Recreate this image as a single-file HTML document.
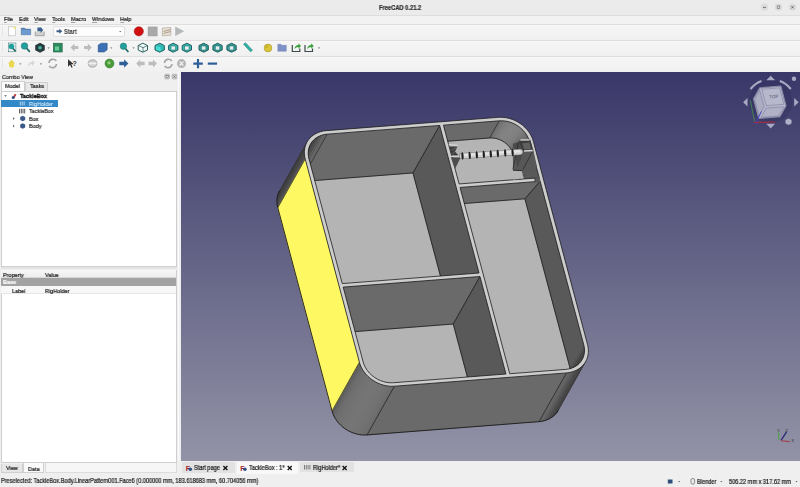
<!DOCTYPE html><html><head><meta charset="utf-8"><style>
*{margin:0;padding:0;box-sizing:border-box}
html,body{width:800px;height:487px;overflow:hidden;background:#efefef;font-family:"Liberation Sans",sans-serif;color:#1c1c1c}
.a{position:absolute}
.t{position:absolute;z-index:2;will-change:transform;-webkit-text-stroke:0.22px currentColor;white-space:nowrap;font-size:5.6px;line-height:6px}
#ov{position:absolute;left:0;top:0;z-index:1}
</style></head><body><div class="a" style="left:0;top:0;width:800px;height:15px;background:#ebebeb"></div>
<div class="t" style="left:378.5px;top:4.5px;font-weight:bold;font-size:6.50px;transform:scaleX(0.885);transform-origin:0 50%;color:#2e2e2e">FreeCAD 0.21.2</div>
<div class="a" style="left:0;top:15px;width:800px;height:9px;background:#f2f2f2;border-top:0.5px solid #dedede"></div>
<div class="t" style="left:4.0px;top:15.7px;font-size:6.21px;transform:scaleX(0.885);transform-origin:0 50%">File</div>
<div class="t" style="left:18.8px;top:15.7px;font-size:6.21px;transform:scaleX(0.885);transform-origin:0 50%">Edit</div>
<div class="t" style="left:34.2px;top:15.7px;font-size:6.21px;transform:scaleX(0.885);transform-origin:0 50%">View</div>
<div class="t" style="left:52.2px;top:15.7px;font-size:6.21px;transform:scaleX(0.885);transform-origin:0 50%">Tools</div>
<div class="t" style="left:70.9px;top:15.7px;font-size:6.21px;transform:scaleX(0.885);transform-origin:0 50%">Macro</div>
<div class="t" style="left:91.9px;top:15.7px;font-size:6.21px;transform:scaleX(0.885);transform-origin:0 50%">Windows</div>
<div class="t" style="left:120.4px;top:15.7px;font-size:6.21px;transform:scaleX(0.885);transform-origin:0 50%">Help</div>
<div class="a" style="left:0;top:24px;width:800px;height:16px;background:linear-gradient(#f6f6f6,#f0f0f0);border-top:0.5px solid #e2dede"></div>
<div class="a" style="left:0;top:40px;width:800px;height:16px;background:linear-gradient(#f6f6f6,#f0f0f0);border-top:0.5px solid #e2dede"></div>
<div class="a" style="left:0;top:56px;width:800px;height:16px;background:linear-gradient(#f6f6f6,#f0f0f0);border-top:0.5px solid #e2dede"></div>
<div class="t" style="left:64px;top:28.5px;font-size:6.33px;transform:scaleX(0.885);transform-origin:0 50%;font-weight:bold;color:#333;-webkit-text-stroke:0px">Start</div>
<div class="a" style="left:0;top:71.5px;width:180.5px;height:403px;background:#efefef"></div>
<div class="t" style="left:2px;top:73.8px;font-size:6.21px;transform:scaleX(0.885);transform-origin:0 50%;color:#2a2a2a">Combo View</div>
<div class="a" style="left:0.8px;top:81px;width:24px;height:11px;background:#fbfbfb;border:0.5px solid #cfcfcf;border-bottom:none;border-radius:1px 1px 0 0"></div>
<div class="t" style="left:5px;top:83.2px;font-size:6.21px;transform:scaleX(0.885);transform-origin:0 50%">Model</div>
<div class="a" style="left:25.3px;top:82.2px;width:23px;height:9.3px;background:#e8e8e8;border:0.5px solid #cfcfcf;border-bottom:none;border-radius:1px 1px 0 0"></div>
<div class="t" style="left:30px;top:83.2px;font-size:6.21px;transform:scaleX(0.885);transform-origin:0 50%">Tasks</div>
<div class="a" style="left:0.8px;top:91.4px;width:176px;height:175.5px;background:#ffffff;border:0.5px solid #cfcfcf"></div>
<div class="a" style="left:1.2px;top:99.8px;width:56.6px;height:7px;background:#3388c8"></div>
<div class="t" style="left:20.2px;top:93.2px;font-weight:bold;font-size:6.21px;transform:scaleX(0.885);transform-origin:0 50%;color:#111;-webkit-text-stroke:0.35px #111">TackleBox</div>
<div class="t" style="left:28.6px;top:100.5px;font-size:6.10px;transform:scaleX(0.885);transform-origin:0 50%;color:#d2e6f6;-webkit-text-stroke:0.1px #d2e6f6">RigHolder</div>
<div class="t" style="left:28.8px;top:108.3px;font-size:6.10px;transform:scaleX(0.885);transform-origin:0 50%;color:#2a2a2a">TackleBox</div>
<div class="t" style="left:28.7px;top:115.7px;font-size:6.21px;transform:scaleX(0.885);transform-origin:0 50%;color:#2a2a2a">Box</div>
<div class="t" style="left:28.7px;top:123.2px;font-size:6.21px;transform:scaleX(0.885);transform-origin:0 50%;color:#2a2a2a">Body</div>
<div class="a" style="left:0.8px;top:266.9px;width:176px;height:2.6px;background:#e4e4e4"></div>
<div class="a" style="left:0.8px;top:269.5px;width:176px;height:193px;background:#ffffff;border:0.5px solid #cfcfcf"></div>
<div class="a" style="left:1.2px;top:270.3px;width:175px;height:7.7px;background:linear-gradient(#f7f7f7,#ededed);border-bottom:0.5px solid #d8d8d8"></div>
<div class="t" style="left:2.8px;top:272.2px;font-size:6.21px;transform:scaleX(0.885);transform-origin:0 50%">Property</div>
<div class="t" style="left:45px;top:272.2px;font-size:6.21px;transform:scaleX(0.885);transform-origin:0 50%">Value</div>
<div class="a" style="left:1.2px;top:278px;width:175px;height:8px;background:#a2a2a2"></div>
<div class="t" style="left:3px;top:279.3px;font-size:6.21px;transform:scaleX(0.885);transform-origin:0 50%;color:#fff;font-weight:bold;-webkit-text-stroke:0.2px #fff">Base</div>
<div class="a" style="left:1.2px;top:286px;width:175px;height:8px;background:#f7f7f7;border-bottom:0.5px solid #e6e6e6"></div>
<div class="t" style="left:11.8px;top:288.2px;font-size:6.21px;transform:scaleX(0.885);transform-origin:0 50%">Label</div>
<div class="t" style="left:45px;top:288.2px;font-size:6.21px;transform:scaleX(0.885);transform-origin:0 50%">RigHolder</div>
<div class="a" style="left:1px;top:463.5px;width:21.5px;height:9px;background:#e6e6e6;border:0.5px solid #d0d0d0;border-top:none"></div>
<div class="t" style="left:6px;top:465.4px;font-size:6.21px;transform:scaleX(0.885);transform-origin:0 50%">View</div>
<div class="a" style="left:23.3px;top:462.8px;width:21px;height:10.6px;background:#fafafa;border:0.5px solid #d0d0d0;border-top:none"></div>
<div class="t" style="left:28px;top:465.6px;font-size:6.21px;transform:scaleX(0.885);transform-origin:0 50%">Data</div>
<div class="a" style="left:45px;top:462.8px;width:131.8px;height:10.6px;background:#f6f6f6;border:0.5px solid #dcdcdc;border-top:none"></div>
<div class="a" style="left:180.7px;top:72.4px;width:619.3px;height:388.3px;background:linear-gradient(#383768,#9393a7)"></div>
<div class="a" style="left:178px;top:72.4px;width:1.2px;height:388.3px;background:#fbfbff"></div>
<div class="a" style="left:180.3px;top:460.7px;width:619.7px;height:14px;background:#efefef"></div>
<div class="a" style="left:181.7px;top:462.3px;width:53px;height:10.7px;background:#e2e2e2;border-radius:1px"></div>
<div class="t" style="left:193.6px;top:465.4px;font-size:6.33px;transform:scaleX(0.885);transform-origin:0 50%">Start page</div>
<div class="a" style="left:236.7px;top:462.3px;width:61.5px;height:11.9px;background:#f8f8f8;border-radius:1px"></div>
<div class="t" style="left:249.2px;top:465.4px;font-size:6.33px;transform:scaleX(0.885);transform-origin:0 50%">TackleBox : 1*</div>
<div class="a" style="left:299.9px;top:462.3px;width:54.4px;height:10.2px;background:#e2e2e2;border-radius:1px"></div>
<div class="t" style="left:312.5px;top:465.4px;font-size:6.33px;transform:scaleX(0.885);transform-origin:0 50%">RigHolder*</div>
<div class="a" style="left:0;top:474.3px;width:800px;height:12.7px;background:#efefef"></div>
<div class="t" style="left:1.2px;top:478.2px;font-size:6.33px;transform:scaleX(0.885);transform-origin:0 50%;color:#222">Preselected: TackleBox.Body.LinearPattern001.Face6 (0.000000 mm, 183.618683 mm, 60.704056 mm)</div>
<div class="t" style="left:697px;top:478.5px;font-size:6.33px;transform:scaleX(0.885);transform-origin:0 50%">Blender</div>
<div class="t" style="left:728.7px;top:478.5px;font-size:6.33px;transform:scaleX(0.885);transform-origin:0 50%">506.22 mm x 317.62 mm</div>
<svg id="ov" width="800" height="487" viewBox="0 0 800 487"><defs><clipPath id="c1"><polygon points="308.93,158.66 308.35,155.69 308.20,152.73 308.47,149.85 309.17,147.08 310.28,144.48 311.78,142.09 313.65,139.95 315.86,138.10 318.36,136.57 321.12,135.39 324.08,134.57 327.20,134.13 439.68,125.43 479.04,273.02 342.25,283.59"/></clipPath><clipPath id="c2"><polygon points="343.18,287.08 479.97,276.50 505.98,374.03 393.50,382.72 390.27,382.77 387.00,382.44 383.73,381.72 380.53,380.63 377.45,379.19 374.54,377.42 371.85,375.35 369.42,373.02 367.31,370.47 365.54,367.75 364.14,364.89 363.15,361.95"/></clipPath><clipPath id="c3"><polygon points="443.42,125.14 499.24,120.83 502.47,120.78 505.74,121.11 509.01,121.83 512.21,122.92 515.29,124.36 518.20,126.13 520.89,128.20 523.32,130.53 525.43,133.07 527.20,135.80 528.60,138.66 529.60,141.60 539.24,177.75 459.11,183.95"/></clipPath><clipPath id="c4"><polygon points="460.04,187.43 540.17,181.24 583.81,344.89 584.39,347.86 584.54,350.82 584.27,353.70 583.57,356.47 582.46,359.07 580.96,361.46 579.09,363.60 576.89,365.45 574.38,366.98 571.63,368.16 568.66,368.98 565.54,369.42 509.72,373.74"/></clipPath></defs><circle cx="764.5" cy="7.2" r="3.6" fill="#dcdcdc"/><circle cx="778.5" cy="7.2" r="3.6" fill="#dcdcdc"/><circle cx="792.5" cy="7.2" r="3.6" fill="#dcdcdc"/><line x1="763" y1="7.4" x2="766" y2="7.4" stroke="#333" stroke-width="0.6"/><rect x="777.2" y="5.9" width="2.6" height="2.6" fill="none" stroke="#555" stroke-width="0.5"/><path d="M791.2 5.9 L793.8 8.5 M793.8 5.9 L791.2 8.5" stroke="#333" stroke-width="0.6"/><rect x="8.6" y="26.8" width="7" height="9" fill="#fdfdfd" stroke="#b8b8b8" stroke-width="0.6"/><path d="M13 26.8 h2.6 v3 z" fill="#f2ea60"/><path d="M21.2 28 h3.5 l1 1 h5 v5.8 h-9.5 z" fill="#5a86b8" stroke="#43698f" stroke-width="0.4"/><rect x="21.5" y="29.8" width="9" height="5" fill="#6f9ad0"/><path d="M35.2 31.5 v4.2 h9 v-4.2" fill="#d2d2d2" stroke="#8a8a8a" stroke-width="0.7"/><path d="M37.4 27.5 l3.2 0 l0 -0.5 l2.6 3 l-2.6 3 l0 -1.7 l-3.2 0 z" fill="#3a5f8f"/><rect x="53.4" y="26.6" width="71.2" height="9.7" rx="1" fill="#fdfdfd" stroke="#c4c4c4" stroke-width="0.5"/><path d="M56.5 30.2 h2.8 v-1.5 l3 2.5 l-3 2.5 v-1.5 h-2.8 z" fill="#3d5f87"/><path d="M119.2 30.9 l2 0 l-1 1.3 z" fill="#555"/><circle cx="138.8" cy="31.3" r="4.6" fill="#d21010" stroke="#9c0c0c" stroke-width="0.5"/><rect x="148" y="26.9" width="9.2" height="9.1" fill="#a9a9a9" stroke="#999" stroke-width="0.4"/><path d="M162.3 28 l8.5 -0.5 l0 7.8 l-8.5 0.5 z" fill="#e6e1d6" stroke="#9b8f80" stroke-width="0.5"/><path d="M163.5 31.5 l7 -2 M163.5 33.5 l7 -2" stroke="#8c6f4c" stroke-width="0.6"/><path d="M175.2 26.6 l9 4.7 l-9 4.7 z" fill="#b4b8b8"/><rect x="8.3" y="43" width="7.6" height="8.8" fill="#eef6f6" stroke="#3a6a6a" stroke-width="0.5"/><circle cx="11.5" cy="46.5" r="2.8" fill="#22a09e"/><path d="M13 48.5 l2.5 2.8" stroke="#1f5a58" stroke-width="1.5"/><circle cx="24.5" cy="46" r="3.3" fill="#22a09e" stroke="#1b6e6c" stroke-width="0.5"/><path d="M26.6 48.3 l3.2 3.6" stroke="#1f6a68" stroke-width="1.7"/><polygon points="40,42.8 44.8,45.3 44.8,50.3 40,52.8 35.2,50.3 35.2,45.3" fill="#2b3b3b"/><circle cx="40" cy="47.8" r="1.8" fill="#3fb3a8"/><path d="M47.5 47.4 l2 0 l-1 1.3 z" fill="#555"/><rect x="53.4" y="43.2" width="8.8" height="8.8" fill="#2b8a5c" stroke="#1e5e40" stroke-width="0.6"/><rect x="55" y="46.5" width="4" height="4" fill="#6acb98"/><path d="M70.5 47.5 l4 -4 v2.5 h3.8 v3 h-3.8 v2.5 z" fill="#bdbdbd"/><path d="M91.8 47.5 l-4 -4 v2.5 h-3.8 v3 h3.8 v2.5 z" fill="#bdbdbd"/><path d="M98.2 45 l3 -1.8 l6 0 l0 6.6 l-3 2.2 l-6 0 z" fill="#3c70b5" stroke="#24497a" stroke-width="0.5"/><path d="M110.3 47.4 l2 0 l-1 1.3 z" fill="#555"/><circle cx="123.4" cy="46.2" r="3.2" fill="#22a09e" stroke="#1b6e6c" stroke-width="0.5"/><path d="M125.4 48.5 l3 3.5" stroke="#1f6a68" stroke-width="1.7"/><path d="M132.5 47.4 l2 0 l-1 1.3 z" fill="#555"/><polygon points="138.2,45.5 142.8,43.2 147.5,45.5 147.5,50.0 142.8,52.2 138.2,50.0" fill="#f0f8f8" stroke="#28605e" stroke-width="1"/><path d="M138.5 45.5 l4.5 2.2 l4.5 -2.2 M143 47.7 v4.3" stroke="#245a58" stroke-width="0.7" fill="none"/><polygon points="155.0,45.5 159.7,43.2 164.3,45.5 164.3,50.0 159.7,52.2 155.0,50.0" fill="#2fb8b4" stroke="#28605e" stroke-width="1"/><polygon points="156.0,45.9 160.7,47.2 160.7,51.2 156.0,49.7" fill="#48dcd6"/><polygon points="168.6,45.5 173.2,43.2 177.9,45.5 177.9,50.0 173.2,52.2 168.6,50.0" fill="#2fb8b4" stroke="#28605e" stroke-width="1"/><rect x="171.0" y="46.0" width="4.5" height="4.0" fill="#dff2f1" stroke="#28605e" stroke-width="0.5"/><polygon points="182.2,45.5 186.8,43.2 191.5,45.5 191.5,50.0 186.8,52.2 182.2,50.0" fill="#2fb8b4" stroke="#28605e" stroke-width="1"/><rect x="184.6" y="46.0" width="4.5" height="4.0" fill="#dff2f1" stroke="#28605e" stroke-width="0.5"/><polygon points="199.0,45.5 203.7,43.2 208.3,45.5 208.3,50.0 203.7,52.2 199.0,50.0" fill="#2f9c98" stroke="#28605e" stroke-width="1"/><rect x="201.4" y="46.0" width="4.5" height="4.0" fill="#dff2f1" stroke="#28605e" stroke-width="0.5"/><polygon points="212.9,45.5 217.6,43.2 222.2,45.5 222.2,50.0 217.6,52.2 212.9,50.0" fill="#2f9c98" stroke="#28605e" stroke-width="1"/><rect x="215.3" y="46.0" width="4.5" height="4.0" fill="#dff2f1" stroke="#28605e" stroke-width="0.5"/><polygon points="226.9,45.5 231.6,43.2 236.2,45.5 236.2,50.0 231.6,52.2 226.9,50.0" fill="#2f9c98" stroke="#28605e" stroke-width="1"/><rect x="229.3" y="46.0" width="4.5" height="4.0" fill="#dff2f1" stroke="#28605e" stroke-width="0.5"/><path d="M243.5 44.2 l2 -1.5 l7 7.5 l-2 1.6 z" fill="#2bb0a8" stroke="#1f7a75" stroke-width="0.5"/><circle cx="268" cy="48" r="3.9" fill="#d9c53a" stroke="#a08a1c" stroke-width="0.5"/><circle cx="266.5" cy="46.5" r="1.5" fill="#c8b22c"/><path d="M277.8 44.3 h3.2 l0.8 1 h4.5 v6 h-8.5 z" fill="#7f92c8" stroke="#6678ab" stroke-width="0.4"/><path d="M292.3 45 v6.5 h7.5 v-3" fill="none" stroke="#3b4a4a" stroke-width="1.2"/><path d="M294.5 49 q0.5 -4 4 -4 v-1.8 l2.5 2.8 l-2.5 2.8 v-1.8 q-2.5 0 -4 2z" fill="#3ea03a"/><path d="M305 45 v6.5 h7.5 v-3" fill="none" stroke="#3b4a4a" stroke-width="1.2"/><path d="M307.2 49 q0.5 -4 4 -4 v-1.8 l2.5 2.8 l-2.5 2.8 v-1.8 q-2.5 0 -4 2z" fill="#3ea03a"/><path d="M318.0 47.4 l2 0 l-1 1.3 z" fill="#555"/><path d="M8 63.5 l3.6 -3.8 l3.6 3.8 h-2 v3.5 h-3.2 v-3.5 z" fill="#e5d34a"/><circle cx="11.6" cy="65" r="2.6" fill="#e9d850"/><path d="M19.3 63.4 l2 0 l-1 1.3 z" fill="#555"/><path d="M28 66.5 q0 -4.5 4 -4.5 v-2 l3 3 l-3 3 v-2 q-2.5 0 -4 2.5z" fill="#d8d8d8"/><path d="M40.0 63.4 l2 0 l-1 1.3 z" fill="#555"/><path d="M49 63 a4 4 0 0 1 7.3 -2" fill="none" stroke="#a6a6a6" stroke-width="1.6"/><path d="M56.5 64 a4 4 0 0 1 -7.3 2" fill="none" stroke="#a6a6a6" stroke-width="1.6"/><path d="M68 59.3 l0 7.5 l2 -2 l1.5 3 l1.2 -0.6 l-1.5 -3 l2.7 0 z" fill="#333"/><text x="72.5" y="65.8" font-size="7" font-weight="bold" fill="#3a3a3a" font-family="Liberation Sans">?</text><ellipse cx="92.5" cy="63.5" rx="4.3" ry="3.7" fill="#d0d0d0" stroke="#9a9a9a" stroke-width="0.8"/><rect x="88.5" y="62.7" width="8" height="1.6" fill="#f4f4f4"/><circle cx="109.5" cy="63.5" r="4.5" fill="#4a9c3a" stroke="#2f6e22" stroke-width="0.5"/><circle cx="109" cy="62.8" r="1.6" fill="#9ad07c"/><path d="M119.3 61.8 h4.8 v-2.5 l4.3 4.2 l-4.3 4.2 v-2.5 h-4.8 z" fill="#2f5f97"/><path d="M136.2 63.5 l4 -4 v2.3 h4.5 v3.4 h-4.5 v2.3 z" fill="#bdbdbd"/><path d="M157 63.5 l-4 -4 v2.3 h-4.5 v3.4 h4.5 v2.3 z" fill="#bdbdbd"/><path d="M164.5 63 a4 4 0 0 1 7.3 -2" fill="none" stroke="#a6a6a6" stroke-width="1.6"/><path d="M172 64 a4 4 0 0 1 -7.3 2" fill="none" stroke="#a6a6a6" stroke-width="1.6"/><circle cx="181.5" cy="63.6" r="4.5" fill="#b4b4b4"/><path d="M179.6 61.7 l3.8 3.8 M183.4 61.7 l-3.8 3.8" stroke="#f4f4f4" stroke-width="1.2"/><path d="M193.3 63.6 h9.5 M198 59 v9.2" stroke="#2c5f98" stroke-width="2.2"/><path d="M207.8 63.6 h9.3" stroke="#2c5f98" stroke-width="2.2"/><path d="M2.5 26 v10" stroke="#d8d0d0" stroke-width="0.8" stroke-dasharray="0.8 0.8"/><path d="M2.5 42 v10" stroke="#d8d0d0" stroke-width="0.8" stroke-dasharray="0.8 0.8"/><path d="M2.5 58 v10" stroke="#d8d0d0" stroke-width="0.8" stroke-dasharray="0.8 0.8"/><path d="M4.3 95.3 l2.4 0 l-1.2 1.5 z" fill="#444"/><path d="M12.4 97.5 l2.5 -3.8 l1.6 1 l-2.5 3.8 z" fill="#c23a3a"/><circle cx="13.2" cy="97.6" r="1.5" fill="#34528a"/><path d="M20.3 101.5 v4 M22.2 101.5 v4 M24.1 101.5 v4" stroke="#e0e8ef" stroke-width="0.8"/><path d="M19.6 108.8 v4.6 M21.3 108.8 v4.6 M23 108.8 v4.6 M24.7 108.8 v4.6" stroke="#555" stroke-width="1"/><path d="M13.2 117 l0 3 l1.4 -1.5 z" fill="#555"/><path d="M13.2 124.5 l0 3 l1.4 -1.5 z" fill="#555"/><polygon points="22.7,115.8 25.2,117 25.2,120 22.7,121.3 20.2,120 20.2,117" fill="#3c5b8c"/><polygon points="22.7,123.3 25.2,124.5 25.2,127.5 22.7,128.8 20.2,127.5 20.2,124.5" fill="#3c5b8c"/><text x="185.7" y="470.8" font-size="7.2" font-weight="bold" fill="#a01f2a" font-family="Liberation Sans">F</text><circle cx="190.3" cy="469.2" r="1.8" fill="#2e4f7f"/><text x="240.3" y="470.8" font-size="7.2" font-weight="bold" fill="#a01f2a" font-family="Liberation Sans">F</text><circle cx="244.9" cy="469.2" r="1.8" fill="#2e4f7f"/><path d="M304.5 465 v4.5 M306.3 465 v4.5 M308.1 465 v4.5 M309.9 465 v4.5" stroke="#666" stroke-width="0.8"/><path d="M223.4 466 l4 4 M227.4 466 l-4 4" stroke="#111" stroke-width="1.35"/><path d="M287.7 466 l4 4 M291.7 466 l-4 4" stroke="#111" stroke-width="1.35"/><path d="M342.6 466 l4 4 M346.6 466 l-4 4" stroke="#111" stroke-width="1.35"/><rect x="667.8" y="479.5" width="4.7" height="4" fill="#2f4f7a"/><path d="M678.2 480.9 l2 0 l-1 1.3 z" fill="#555"/><path d="M720.3 480.9 l2 0 l-1 1.3 z" fill="#555"/><path d="M795.5 480.9 l2 0 l-1 1.3 z" fill="#555"/><rect x="691" y="478.5" width="3.6" height="5.6" rx="1.6" fill="none" stroke="#444" stroke-width="0.6"/><rect x="164.8" y="74.3" width="4.6" height="4.6" rx="0.8" fill="#d9d9d9" stroke="#8a8a8a" stroke-width="0.5"/><rect x="166" y="75.5" width="2.4" height="2.2" fill="none" stroke="#555" stroke-width="0.45"/><rect x="172.2" y="74.3" width="4.6" height="4.6" rx="0.8" fill="#d9d9d9" stroke="#8a8a8a" stroke-width="0.5"/><path d="M173.3 75.4 l2.4 2.4 M175.7 75.4 l-2.4 2.4" stroke="#444" stroke-width="0.55"/><rect x="4.1" y="22.4" width="2.7" height="0.5" fill="#555"/><rect x="18.9" y="22.4" width="3.0" height="0.5" fill="#555"/><rect x="34.3" y="22.4" width="3.6" height="0.5" fill="#555"/><rect x="52.3" y="22.4" width="3.0" height="0.5" fill="#555"/><rect x="71.0" y="22.4" width="4.2" height="0.5" fill="#555"/><rect x="92.0" y="22.4" width="5.2" height="0.5" fill="#555"/><rect x="120.5" y="22.4" width="3.6" height="0.5" fill="#555"/><polygon points="305.19,158.95 304.65,156.38 277.25,205.10 277.80,207.67" fill="#555555" stroke="#555555" stroke-width="0.5"/><polygon points="304.65,156.38 304.37,153.81 276.98,202.53 277.25,205.10" fill="#4c4c4c" stroke="#4c4c4c" stroke-width="0.5"/><polygon points="304.37,153.81 304.38,151.27 276.98,199.99 276.98,202.53" fill="#454545" stroke="#454545" stroke-width="0.5"/><polygon points="304.38,151.27 304.66,148.78 277.27,197.50 276.98,199.99" fill="#424242" stroke="#424242" stroke-width="0.5"/><polygon points="304.66,148.78 305.22,146.37 277.82,195.09 277.27,197.50" fill="#3f3f3f" stroke="#3f3f3f" stroke-width="0.5"/><polygon points="305.22,146.37 306.05,144.06 278.65,192.78 277.82,195.09" fill="#3c3c3c" stroke="#3c3c3c" stroke-width="0.5"/><polygon points="306.05,144.06 307.14,141.87 279.74,190.60 278.65,192.78" fill="#383838" stroke="#383838" stroke-width="0.5"/><polygon points="585.60,361.67 584.26,363.72 556.87,412.44 558.21,410.39" fill="#393939" stroke="#393939" stroke-width="0.5"/><polygon points="584.26,363.72 582.68,365.60 555.29,414.32 556.87,412.44" fill="#3c3c3c" stroke="#3c3c3c" stroke-width="0.5"/><polygon points="582.68,365.60 580.88,367.30 553.48,416.02 555.29,414.32" fill="#3f3f3f" stroke="#3f3f3f" stroke-width="0.5"/><polygon points="580.88,367.30 578.87,368.80 551.47,417.52 553.48,416.02" fill="#434343" stroke="#434343" stroke-width="0.5"/><polygon points="578.87,368.80 576.67,370.09 549.28,418.81 551.47,417.52" fill="#464646" stroke="#464646" stroke-width="0.5"/><polygon points="576.67,370.09 574.31,371.15 546.92,419.87 549.28,418.81" fill="#4d4d4d" stroke="#4d4d4d" stroke-width="0.5"/><polygon points="574.31,371.15 571.81,371.98 544.41,420.70 546.92,419.87" fill="#565656" stroke="#565656" stroke-width="0.5"/><polygon points="571.81,371.98 569.18,372.57 541.79,421.29 544.41,420.70" fill="#5f5f5f" stroke="#5f5f5f" stroke-width="0.5"/><polygon points="569.18,372.57 566.47,372.91 539.07,421.63 541.79,421.29" fill="#666666" stroke="#666666" stroke-width="0.5"/><polygon points="566.47,372.91 394.43,386.21 367.03,434.93 539.07,421.63" fill="#6a6a6a" stroke="#6a6a6a" stroke-width="0.5"/><polygon points="394.43,386.21 391.64,386.29 364.25,435.01 367.03,434.93" fill="#6b6b6b" stroke="#6b6b6b" stroke-width="0.5"/><polygon points="391.64,386.29 388.82,386.13 361.43,434.85 364.25,435.01" fill="#6e6e6e" stroke="#6e6e6e" stroke-width="0.5"/><polygon points="388.82,386.13 385.98,385.71 358.59,434.43 361.43,434.85" fill="#707070" stroke="#707070" stroke-width="0.5"/><polygon points="385.98,385.71 383.16,385.05 355.77,433.77 358.59,434.43" fill="#727272" stroke="#727272" stroke-width="0.5"/><polygon points="383.16,385.05 380.38,384.14 352.99,432.86 355.77,433.77" fill="#737373" stroke="#737373" stroke-width="0.5"/><polygon points="380.38,384.14 377.67,383.01 350.27,431.73 352.99,432.86" fill="#747474" stroke="#747474" stroke-width="0.5"/><polygon points="377.67,383.01 375.05,381.65 347.65,430.37 350.27,431.73" fill="#757575" stroke="#757575" stroke-width="0.5"/><polygon points="375.05,381.65 372.55,380.08 345.16,428.81 347.65,430.37" fill="#757575" stroke="#757575" stroke-width="0.5"/><polygon points="372.55,380.08 370.20,378.33 342.80,427.05 345.16,428.81" fill="#747474" stroke="#747474" stroke-width="0.5"/><polygon points="370.20,378.33 368.01,376.39 340.61,425.12 342.80,427.05" fill="#737373" stroke="#737373" stroke-width="0.5"/><polygon points="368.01,376.39 366.00,374.30 338.61,423.02 340.61,425.12" fill="#727272" stroke="#727272" stroke-width="0.5"/><polygon points="366.00,374.30 364.21,372.08 336.81,420.80 338.61,423.02" fill="#707070" stroke="#707070" stroke-width="0.5"/><polygon points="364.21,372.08 362.64,369.73 335.24,418.45 336.81,420.80" fill="#6e6e6e" stroke="#6e6e6e" stroke-width="0.5"/><polygon points="362.64,369.73 361.30,367.30 333.91,416.02 335.24,418.45" fill="#6b6b6b" stroke="#6b6b6b" stroke-width="0.5"/><polygon points="361.30,367.30 360.22,364.79 332.83,413.51 333.91,416.02" fill="#656565" stroke="#656565" stroke-width="0.5"/><polygon points="360.22,364.79 359.41,362.24 332.01,410.96 332.83,413.51" fill="#5d5d5d" stroke="#5d5d5d" stroke-width="0.5"/><polygon points="359.41,362.24 305.19,158.95 277.80,207.67 332.01,410.96" fill="#fef862" stroke="#fef862" stroke-width="0.5"/><line x1="305.19" y1="158.95" x2="277.80" y2="207.67" stroke="#1a1a1a" stroke-width="0.70"/><line x1="359.41" y1="362.24" x2="332.01" y2="410.96" stroke="#1a1a1a" stroke-width="0.70"/><line x1="394.43" y1="386.21" x2="367.03" y2="434.93" stroke="#1a1a1a" stroke-width="0.70"/><line x1="566.47" y1="372.91" x2="539.07" y2="421.63" stroke="#1a1a1a" stroke-width="0.70"/><line x1="277.80" y1="207.67" x2="277.25" y2="205.10" stroke="#1a1a1a" stroke-width="0.90"/><line x1="277.25" y1="205.10" x2="276.98" y2="202.53" stroke="#1a1a1a" stroke-width="0.90"/><line x1="276.98" y1="202.53" x2="276.98" y2="199.99" stroke="#1a1a1a" stroke-width="0.90"/><line x1="276.98" y1="199.99" x2="277.27" y2="197.50" stroke="#1a1a1a" stroke-width="0.90"/><line x1="277.27" y1="197.50" x2="277.82" y2="195.09" stroke="#1a1a1a" stroke-width="0.90"/><line x1="277.82" y1="195.09" x2="278.65" y2="192.78" stroke="#1a1a1a" stroke-width="0.90"/><line x1="278.65" y1="192.78" x2="279.74" y2="190.60" stroke="#1a1a1a" stroke-width="0.90"/><line x1="558.21" y1="410.39" x2="556.87" y2="412.44" stroke="#1a1a1a" stroke-width="0.90"/><line x1="556.87" y1="412.44" x2="555.29" y2="414.32" stroke="#1a1a1a" stroke-width="0.90"/><line x1="555.29" y1="414.32" x2="553.48" y2="416.02" stroke="#1a1a1a" stroke-width="0.90"/><line x1="553.48" y1="416.02" x2="551.47" y2="417.52" stroke="#1a1a1a" stroke-width="0.90"/><line x1="551.47" y1="417.52" x2="549.28" y2="418.81" stroke="#1a1a1a" stroke-width="0.90"/><line x1="549.28" y1="418.81" x2="546.92" y2="419.87" stroke="#1a1a1a" stroke-width="0.90"/><line x1="546.92" y1="419.87" x2="544.41" y2="420.70" stroke="#1a1a1a" stroke-width="0.90"/><line x1="544.41" y1="420.70" x2="541.79" y2="421.29" stroke="#1a1a1a" stroke-width="0.90"/><line x1="541.79" y1="421.29" x2="539.07" y2="421.63" stroke="#1a1a1a" stroke-width="0.90"/><line x1="539.07" y1="421.63" x2="367.03" y2="434.93" stroke="#1a1a1a" stroke-width="0.90"/><line x1="367.03" y1="434.93" x2="364.25" y2="435.01" stroke="#1a1a1a" stroke-width="0.90"/><line x1="364.25" y1="435.01" x2="361.43" y2="434.85" stroke="#1a1a1a" stroke-width="0.90"/><line x1="361.43" y1="434.85" x2="358.59" y2="434.43" stroke="#1a1a1a" stroke-width="0.90"/><line x1="358.59" y1="434.43" x2="355.77" y2="433.77" stroke="#1a1a1a" stroke-width="0.90"/><line x1="355.77" y1="433.77" x2="352.99" y2="432.86" stroke="#1a1a1a" stroke-width="0.90"/><line x1="352.99" y1="432.86" x2="350.27" y2="431.73" stroke="#1a1a1a" stroke-width="0.90"/><line x1="350.27" y1="431.73" x2="347.65" y2="430.37" stroke="#1a1a1a" stroke-width="0.90"/><line x1="347.65" y1="430.37" x2="345.16" y2="428.81" stroke="#1a1a1a" stroke-width="0.90"/><line x1="345.16" y1="428.81" x2="342.80" y2="427.05" stroke="#1a1a1a" stroke-width="0.90"/><line x1="342.80" y1="427.05" x2="340.61" y2="425.12" stroke="#1a1a1a" stroke-width="0.90"/><line x1="340.61" y1="425.12" x2="338.61" y2="423.02" stroke="#1a1a1a" stroke-width="0.90"/><line x1="338.61" y1="423.02" x2="336.81" y2="420.80" stroke="#1a1a1a" stroke-width="0.90"/><line x1="336.81" y1="420.80" x2="335.24" y2="418.45" stroke="#1a1a1a" stroke-width="0.90"/><line x1="335.24" y1="418.45" x2="333.91" y2="416.02" stroke="#1a1a1a" stroke-width="0.90"/><line x1="333.91" y1="416.02" x2="332.83" y2="413.51" stroke="#1a1a1a" stroke-width="0.90"/><line x1="332.83" y1="413.51" x2="332.01" y2="410.96" stroke="#1a1a1a" stroke-width="0.90"/><line x1="332.01" y1="410.96" x2="277.80" y2="207.67" stroke="#1a1a1a" stroke-width="0.90"/><polygon points="305.19,158.95 304.65,156.38 304.37,153.81 304.38,151.27 304.66,148.78 305.22,146.37 306.05,144.06 307.14,141.87 308.48,139.83 310.06,137.95 311.86,136.25 313.87,134.75 316.07,133.46 318.43,132.40 320.93,131.57 323.56,130.98 326.27,130.64 498.32,117.34 501.10,117.26 503.92,117.42 506.76,117.84 509.58,118.50 512.36,119.41 515.07,120.54 517.69,121.90 520.19,123.46 522.55,125.22 524.74,127.15 526.74,129.25 528.53,131.47 530.10,133.82 531.44,136.25 532.52,138.76 533.34,141.31 587.55,344.60 588.10,347.17 588.37,349.74 588.36,352.28 588.08,354.77 587.52,357.18 586.69,359.49 585.60,361.67 584.26,363.72 582.68,365.60 580.88,367.30 578.87,368.80 576.67,370.09 574.31,371.15 571.81,371.98 569.18,372.57 566.47,372.91 394.43,386.21 391.64,386.29 388.82,386.13 385.98,385.71 383.16,385.05 380.38,384.14 377.67,383.01 375.05,381.65 372.55,380.08 370.20,378.33 368.01,376.39 366.00,374.30 364.21,372.08 362.64,369.73 361.30,367.30 360.22,364.79 359.41,362.24" fill="#cdcdcd" stroke="#1a1a1a" stroke-width="0.8"/><g clip-path="url(#c1)"><polygon points="308.93,158.66 308.35,155.69 308.20,152.73 308.47,149.85 309.17,147.08 310.28,144.48 311.78,142.09 313.65,139.95 315.86,138.10 318.36,136.57 321.12,135.39 324.08,134.57 327.20,134.13 439.68,125.43 479.04,273.02 342.25,283.59" fill="#b4b4b4"/><polygon points="310.28,144.48 311.78,142.09 285.07,189.59 283.57,191.98" fill="#383838" stroke="#383838" stroke-width="0.5"/><polygon points="311.78,142.09 313.65,139.95 286.94,187.45 285.07,189.59" fill="#3d3d3d" stroke="#3d3d3d" stroke-width="0.5"/><polygon points="313.65,139.95 315.86,138.10 289.15,185.60 286.94,187.45" fill="#414141" stroke="#414141" stroke-width="0.5"/><polygon points="315.86,138.10 318.36,136.57 291.65,184.07 289.15,185.60" fill="#454545" stroke="#454545" stroke-width="0.5"/><polygon points="318.36,136.57 321.12,135.39 294.41,182.88 291.65,184.07" fill="#4f4f4f" stroke="#4f4f4f" stroke-width="0.5"/><polygon points="321.12,135.39 324.08,134.57 297.37,182.07 294.41,182.88" fill="#5a5a5a" stroke="#5a5a5a" stroke-width="0.5"/><polygon points="324.08,134.57 327.20,134.13 300.50,181.63 297.37,182.07" fill="#656565" stroke="#656565" stroke-width="0.5"/><polygon points="327.20,134.13 439.68,125.43 412.98,172.93 300.50,181.63" fill="#6a6a6a" stroke="#6a6a6a" stroke-width="0.5"/><polygon points="439.68,125.43 479.04,273.02 452.33,320.52 412.98,172.93" fill="#595959" stroke="#595959" stroke-width="0.5"/><polygon points="282.23,206.16 281.65,203.18 281.49,200.23 281.76,197.35 282.46,194.58 283.57,191.98 285.07,189.59 286.94,187.45 289.15,185.60 291.65,184.07 294.41,182.88 297.37,182.07 300.50,181.63 412.98,172.93 452.33,320.52 315.54,331.09" fill="none" stroke="#1a1a1a" stroke-width="0.8"/></g><polygon points="308.93,158.66 308.35,155.69 308.20,152.73 308.47,149.85 309.17,147.08 310.28,144.48 311.78,142.09 313.65,139.95 315.86,138.10 318.36,136.57 321.12,135.39 324.08,134.57 327.20,134.13 439.68,125.43 479.04,273.02 342.25,283.59" fill="none" stroke="#1a1a1a" stroke-width="0.8"/><g clip-path="url(#c1)"><line x1="327.20" y1="134.13" x2="300.50" y2="181.63" stroke="#1a1a1a" stroke-width="0.60"/><line x1="308.93" y1="158.66" x2="282.23" y2="206.16" stroke="#1a1a1a" stroke-width="0.60"/></g><g clip-path="url(#c1)"><line x1="439.68" y1="125.43" x2="412.98" y2="172.93" stroke="#1a1a1a" stroke-width="0.80"/></g><g clip-path="url(#c2)"><polygon points="343.18,287.08 479.97,276.50 505.98,374.03 393.50,382.72 390.27,382.77 387.00,382.44 383.73,381.72 380.53,380.63 377.45,379.19 374.54,377.42 371.85,375.35 369.42,373.02 367.31,370.47 365.54,367.75 364.14,364.89 363.15,361.95" fill="#b4b4b4"/><polygon points="343.18,287.08 479.97,276.50 453.26,324.00 316.47,334.58" fill="#6a6a6a" stroke="#6a6a6a" stroke-width="0.5"/><polygon points="479.97,276.50 505.98,374.03 479.27,421.52 453.26,324.00" fill="#595959" stroke="#595959" stroke-width="0.5"/><polygon points="316.47,334.58 453.26,324.00 479.27,421.52 366.79,430.22 363.56,430.27 360.29,429.94 357.03,429.22 353.83,428.13 350.74,426.68 347.83,424.91 345.14,422.85 342.72,420.52 340.60,417.97 338.83,415.25 337.44,412.39 336.44,409.45" fill="none" stroke="#1a1a1a" stroke-width="0.8"/></g><polygon points="343.18,287.08 479.97,276.50 505.98,374.03 393.50,382.72 390.27,382.77 387.00,382.44 383.73,381.72 380.53,380.63 377.45,379.19 374.54,377.42 371.85,375.35 369.42,373.02 367.31,370.47 365.54,367.75 364.14,364.89 363.15,361.95" fill="none" stroke="#1a1a1a" stroke-width="0.8"/><g clip-path="url(#c2)"><line x1="479.97" y1="276.50" x2="453.26" y2="324.00" stroke="#1a1a1a" stroke-width="0.80"/></g><g clip-path="url(#c3)"><polygon points="443.42,125.14 499.24,120.83 502.47,120.78 505.74,121.11 509.01,121.83 512.21,122.92 515.29,124.36 518.20,126.13 520.89,128.20 523.32,130.53 525.43,133.07 527.20,135.80 528.60,138.66 529.60,141.60 539.24,177.75 459.11,183.95" fill="#b4b4b4"/><polygon points="443.42,125.14 499.24,120.83 489.61,137.97 433.79,142.28" fill="#6a6a6a" stroke="#6a6a6a" stroke-width="0.5"/><polygon points="499.24,120.83 502.47,120.78 492.09,137.93 489.61,137.97" fill="#6e6e6e" stroke="#6e6e6e" stroke-width="0.5"/><polygon points="502.47,120.78 505.74,121.11 494.61,138.19 492.09,137.93" fill="#767676" stroke="#767676" stroke-width="0.5"/><polygon points="505.74,121.11 509.01,121.83 497.12,138.74 494.61,138.19" fill="#7c7c7c" stroke="#7c7c7c" stroke-width="0.5"/><polygon points="509.01,121.83 512.21,122.92 499.58,139.58 497.12,138.74" fill="#808080" stroke="#808080" stroke-width="0.5"/><polygon points="512.21,122.92 515.29,124.36 501.95,140.69 499.58,139.58" fill="#828282" stroke="#828282" stroke-width="0.5"/><polygon points="515.29,124.36 518.20,126.13 504.19,142.05 501.95,140.69" fill="#828282" stroke="#828282" stroke-width="0.5"/><polygon points="518.20,126.13 520.89,128.20 506.26,143.64 504.19,142.05" fill="#818181" stroke="#818181" stroke-width="0.5"/><polygon points="520.89,128.20 523.32,130.53 508.13,145.43 506.26,143.64" fill="#7e7e7e" stroke="#7e7e7e" stroke-width="0.5"/><polygon points="523.32,130.53 525.43,133.07 509.75,147.39 508.13,145.43" fill="#787878" stroke="#787878" stroke-width="0.5"/><polygon points="525.43,133.07 527.20,135.80 511.12,149.48 509.75,147.39" fill="#717171" stroke="#717171" stroke-width="0.5"/><polygon points="527.20,135.80 528.60,138.66 512.19,151.68 511.12,149.48" fill="#696969" stroke="#696969" stroke-width="0.5"/><polygon points="528.60,138.66 529.60,141.60 512.95,153.94 512.19,151.68" fill="#5f5f5f" stroke="#5f5f5f" stroke-width="0.5"/><polygon points="529.60,141.60 539.24,177.75 523.99,195.33 512.95,153.94" fill="#595959" stroke="#595959" stroke-width="0.5"/><polygon points="433.79,142.28 489.61,137.97 492.09,137.93 494.61,138.19 497.12,138.74 499.58,139.58 501.95,140.69 504.19,142.05 506.26,143.64 508.13,145.43 509.75,147.39 511.12,149.48 512.19,151.68 512.95,153.94 523.99,195.33 449.47,201.09" fill="none" stroke="#1a1a1a" stroke-width="0.8"/></g><polygon points="443.42,125.14 499.24,120.83 502.47,120.78 505.74,121.11 509.01,121.83 512.21,122.92 515.29,124.36 518.20,126.13 520.89,128.20 523.32,130.53 525.43,133.07 527.20,135.80 528.60,138.66 529.60,141.60 539.24,177.75 459.11,183.95" fill="none" stroke="#1a1a1a" stroke-width="0.8"/><g clip-path="url(#c3)"><line x1="499.24" y1="120.83" x2="489.61" y2="137.97" stroke="#1a1a1a" stroke-width="0.60"/></g><g clip-path="url(#c4)"><polygon points="460.04,187.43 540.17,181.24 583.81,344.89 584.39,347.86 584.54,350.82 584.27,353.70 583.57,356.47 582.46,359.07 580.96,361.46 579.09,363.60 576.89,365.45 574.38,366.98 571.63,368.16 568.66,368.98 565.54,369.42 509.72,373.74" fill="#b4b4b4"/><polygon points="460.04,187.43 540.17,181.24 524.92,198.81 450.40,204.57" fill="#6a6a6a" stroke="#6a6a6a" stroke-width="0.5"/><polygon points="540.17,181.24 583.81,344.89 569.96,367.69 524.92,198.81" fill="#595959" stroke="#595959" stroke-width="0.5"/><polygon points="583.81,344.89 584.39,347.86 570.40,369.98 569.96,367.69" fill="#535353" stroke="#535353" stroke-width="0.5"/><polygon points="584.39,347.86 584.54,350.82 570.52,372.25 570.40,369.98" fill="#474747" stroke="#474747" stroke-width="0.5"/><polygon points="584.54,350.82 584.27,353.70 570.31,374.47 570.52,372.25" fill="#434343" stroke="#434343" stroke-width="0.5"/><polygon points="584.27,353.70 583.57,356.47 569.77,376.60 570.31,374.47" fill="#3e3e3e" stroke="#3e3e3e" stroke-width="0.5"/><polygon points="583.57,356.47 582.46,359.07 568.92,378.60 569.77,376.60" fill="#3a3a3a" stroke="#3a3a3a" stroke-width="0.5"/><polygon points="450.40,204.57 524.92,198.81 569.96,367.69 570.40,369.98 570.52,372.25 570.31,374.47 569.77,376.60 568.92,378.60 567.76,380.43 566.33,382.08 564.63,383.50 562.71,384.68 560.58,385.59 558.30,386.22 555.90,386.56 500.08,390.88" fill="none" stroke="#1a1a1a" stroke-width="0.8"/></g><polygon points="460.04,187.43 540.17,181.24 583.81,344.89 584.39,347.86 584.54,350.82 584.27,353.70 583.57,356.47 582.46,359.07 580.96,361.46 579.09,363.60 576.89,365.45 574.38,366.98 571.63,368.16 568.66,368.98 565.54,369.42 509.72,373.74" fill="none" stroke="#1a1a1a" stroke-width="0.8"/><g clip-path="url(#c4)"><line x1="540.17" y1="181.24" x2="524.92" y2="198.81" stroke="#1a1a1a" stroke-width="0.80"/></g><polygon points="512.8,170.4 522.5,170.8 523.8,178.6 513,179.5" fill="#b4b4b4"/><polygon points="534.2,177.6 539.8,177.2 540.6,182 535.2,182.4" fill="#595959"/><path d="M534.3 178.1 q1.2 1.7 0.9 3.6" stroke="#1f1f1f" stroke-width="0.6" fill="none"/><path d="M513 170.3 L522.5 170.7 L523.5 176.5" stroke="#1f1f1f" stroke-width="0.6" fill="none"/><polygon points="512.8,144 518.3,141.5 520.5,139.5 530,139 533.5,150.5 537,167 524,177.5 522.5,170.6 513,170.2" fill="#585858"/><polygon points="518.5,141.5 530.5,140.5 533,150.5 523.5,151.5" fill="#3a3a3a"/><polygon points="522,143.2 529.5,142.6 531,149.3 524.2,149.6" fill="#606060"/><polygon points="513,144 518.3,142 523.5,151.5 517.5,168" fill="#4a4a4a"/><path d="M518.3 143 L512.8 169.5 M532.2 152 L523 169.5 M513 170.2 L522.5 170.6" stroke="#1f1f1f" stroke-width="0.6" fill="none"/><path d="M520.4 139.9 L529.6 139.9" stroke="#d6d6d6" stroke-width="1.3"/><path d="M524 151 L532.7 150.5" stroke="#d6d6d6" stroke-width="1.3"/><polygon points="449.5,146.5 457.5,146.5 455,151.5 458.5,155.5 451.5,155.5" fill="#3c3c3c"/><path d="M452 150 L456.5 147.5 M452 154.5 L455.5 151" stroke="#8a8a8a" stroke-width="0.6"/><polygon points="450.8,157.3 460.6,157.6 455,168.9" fill="#4c4c4c"/><path d="M448.7 144.6 L457.8 145.4" stroke="#d4d4d4" stroke-width="1.3"/><path d="M450.4 156.4 L460.6 156.4" stroke="#d4d4d4" stroke-width="1.3"/><path d="M462 155.90 L520 151.93" stroke="#7a7a7a" stroke-width="6.0" stroke-linecap="round"/><path d="M462 155.90 L520 151.93" stroke="#d2d2d2" stroke-width="5.0" stroke-linecap="round"/><path d="M462 155.20 L520 151.23" stroke="#e6e6e6" stroke-width="2"/><ellipse cx="462.5" cy="155.87" rx="1.1" ry="3.7" fill="#1e1e1e" transform="rotate(-4 462.5 155.87)"/><ellipse cx="469.7" cy="155.37" rx="1.1" ry="3.7" fill="#1e1e1e" transform="rotate(-4 469.7 155.37)"/><ellipse cx="476.8" cy="154.89" rx="1.1" ry="3.7" fill="#1e1e1e" transform="rotate(-4 476.8 154.89)"/><ellipse cx="483.8" cy="154.41" rx="1.1" ry="3.7" fill="#1e1e1e" transform="rotate(-4 483.8 154.41)"/><ellipse cx="490.8" cy="153.93" rx="1.1" ry="3.7" fill="#1e1e1e" transform="rotate(-4 490.8 153.93)"/><ellipse cx="497.8" cy="153.45" rx="1.1" ry="3.7" fill="#1e1e1e" transform="rotate(-4 497.8 153.45)"/><ellipse cx="505.2" cy="152.94" rx="1.1" ry="3.7" fill="#1e1e1e" transform="rotate(-4 505.2 152.94)"/><ellipse cx="512.6" cy="152.44" rx="1.1" ry="3.7" fill="#1e1e1e" transform="rotate(-4 512.6 152.44)"/><circle cx="770.7" cy="101.5" r="21.5" fill="#2c2b58" opacity="0.3"/><path d="M766.3 80.3 l4.4 -4.6 l4.4 4.6 z" fill="#a9a9c4"/><path d="M747.5 98 l-4.4 4.3 l4.4 4.3 z" fill="#a9a9c4"/><path d="M794.2 98 l4.4 4.3 l-4.4 4.3 z" fill="#a9a9c4"/><path d="M766.3 123.8 l4.4 4.6 l4.4 -4.6 z" fill="#a9a9c4"/><path d="M750.5 89 q5 -6 11 -8" fill="none" stroke="#a9a9c4" stroke-width="2.2"/><path d="M779.8 81 q6 2 11 8" fill="none" stroke="#a9a9c4" stroke-width="2.2"/><circle cx="794" cy="78.8" r="2.2" fill="#a9a9c4"/><polygon points="780.8,86.2 786.0,105.8 779.8,116.7 758.8,118.4 753.6,98.8 759.8,87.9" fill="#b6b6cc" stroke="#8a8aa6" stroke-width="1.2" stroke-linejoin="round"/><polygon points="761.9,89.3 779.5,87.9 783.9,104.3 766.3,105.7" fill="#b8b8cc" stroke="#8080a0" stroke-width="0.6"/><polygon points="759.7,90.3 764.1,106.7 758.9,115.9 754.6,99.5" fill="#acacc2" stroke="#8080a0" stroke-width="0.6"/><polygon points="766.2,108.1 783.8,106.8 778.6,116.0 761.0,117.3" fill="#b0b0c6" stroke="#8080a0" stroke-width="0.6"/><text x="773.9" y="98.3" font-size="4.6" fill="#50506a" font-family="Liberation Sans" text-anchor="middle" transform="rotate(-4 772.9 96.8)">TOP</text><path d="M785.5 120 l3 -1.6 l3 1.6 v3.4 l-3 1.6 l-3 -1.6 z" fill="#b0b0c8" stroke="#7d7d9a" stroke-width="0.4"/><path d="M750.3 100.4 l4.3 21" stroke="#46a046" stroke-width="0.7"/><path d="M761.4 111.5 l-6 12.3" stroke="#3c3cc8" stroke-width="0.9"/><path d="M754 122.5 l21 -0.5" stroke="#b02a3c" stroke-width="1.1"/><path d="M778.5 431.5 l0.4 8.5" stroke="#52a050" stroke-width="1.3"/><path d="M781 440.3 l5.6 -8.5" stroke="#2a2a7a" stroke-width="1.3"/><path d="M781 440.8 l8.7 0.8" stroke="#a04050" stroke-width="1.1"/><text x="777.2" y="432" font-size="3.6" fill="#222" font-family="Liberation Sans">Y</text><text x="785.6" y="432" font-size="3.6" fill="#222" font-family="Liberation Sans">Z</text><text x="791.6" y="441.5" font-size="3.6" fill="#222" font-family="Liberation Sans">X</text></svg></body></html>
